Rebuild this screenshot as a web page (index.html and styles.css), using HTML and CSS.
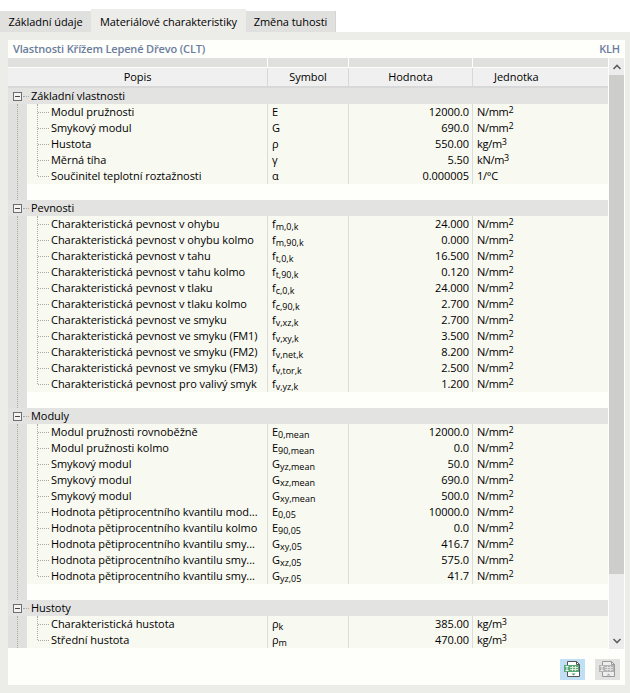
FILE: index.html
```html
<!DOCTYPE html>
<html lang="cs">
<head>
<meta charset="utf-8">
<title>Vlastnosti</title>
<link rel="stylesheet" href="styles.css">
</head>
<body>
<div class="tabs">
  <div class="tab t1">Základní údaje</div>
  <div class="tab active">Materiálové charakteristiky</div>
  <div class="tab t3">Změna tuhosti</div>
</div>
<div class="page">
  <div class="panel">
    <div class="title"><span>Vlastnosti Křížem Lepené Dřevo (CLT)</span><span>KLH</span></div>
    <div class="main">
      <div class="table">
        <div class="strip"><i class="c1"></i><i class="c2"></i><i class="c3"></i><i class="c4"></i></div>
        <div class="head">
          <div class="c1">Popis</div><div class="c2">Symbol</div><div class="c3">Hodnota</div><div class="c4 hu">Jednotka</div>
        </div>

        <section class="section">
          <div class="ghead"><span class="box"></span><span class="dash"></span>Základní vlastnosti</div>
          <div class="sbody"><div class="gutter"></div><div class="rows">
            <div class="items">
            <div class="row"><div class="c1">Modul pružnosti</div><div class="c2">E</div><div class="c3">12000.0</div><div class="c4">N/mm<sup>2</sup></div></div>
            <div class="row"><div class="c1">Smykový modul</div><div class="c2">G</div><div class="c3">690.0</div><div class="c4">N/mm<sup>2</sup></div></div>
            <div class="row"><div class="c1">Hustota</div><div class="c2">ρ</div><div class="c3">550.00</div><div class="c4">kg/m<sup>3</sup></div></div>
            <div class="row"><div class="c1">Měrná tíha</div><div class="c2">γ</div><div class="c3">5.50</div><div class="c4">kN/m<sup>3</sup></div></div>
            <div class="row"><div class="c1">Součinitel teplotní roztažnosti</div><div class="c2">α</div><div class="c3">0.000005</div><div class="c4">1/°C</div></div>
            </div>
            <div class="blank"></div>
          </div></div>
        </section>

        <section class="section">
          <div class="ghead"><span class="box"></span><span class="dash"></span>Pevnosti</div>
          <div class="sbody"><div class="gutter"></div><div class="rows">
            <div class="items">
            <div class="row"><div class="c1">Charakteristická pevnost v ohybu</div><div class="c2">f<sub>m,0,k</sub></div><div class="c3">24.000</div><div class="c4">N/mm<sup>2</sup></div></div>
            <div class="row"><div class="c1">Charakteristická pevnost v ohybu kolmo</div><div class="c2">f<sub>m,90,k</sub></div><div class="c3">0.000</div><div class="c4">N/mm<sup>2</sup></div></div>
            <div class="row"><div class="c1">Charakteristická pevnost v tahu</div><div class="c2">f<sub>t,0,k</sub></div><div class="c3">16.500</div><div class="c4">N/mm<sup>2</sup></div></div>
            <div class="row"><div class="c1">Charakteristická pevnost v tahu kolmo</div><div class="c2">f<sub>t,90,k</sub></div><div class="c3">0.120</div><div class="c4">N/mm<sup>2</sup></div></div>
            <div class="row"><div class="c1">Charakteristická pevnost v tlaku</div><div class="c2">f<sub>c,0,k</sub></div><div class="c3">24.000</div><div class="c4">N/mm<sup>2</sup></div></div>
            <div class="row"><div class="c1">Charakteristická pevnost v tlaku kolmo</div><div class="c2">f<sub>c,90,k</sub></div><div class="c3">2.700</div><div class="c4">N/mm<sup>2</sup></div></div>
            <div class="row"><div class="c1">Charakteristická pevnost ve smyku</div><div class="c2">f<sub>v,xz,k</sub></div><div class="c3">2.700</div><div class="c4">N/mm<sup>2</sup></div></div>
            <div class="row"><div class="c1">Charakteristická pevnost ve smyku (FM1)</div><div class="c2">f<sub>v,xy,k</sub></div><div class="c3">3.500</div><div class="c4">N/mm<sup>2</sup></div></div>
            <div class="row"><div class="c1">Charakteristická pevnost ve smyku (FM2)</div><div class="c2">f<sub>v,net,k</sub></div><div class="c3">8.200</div><div class="c4">N/mm<sup>2</sup></div></div>
            <div class="row"><div class="c1">Charakteristická pevnost ve smyku (FM3)</div><div class="c2">f<sub>v,tor,k</sub></div><div class="c3">2.500</div><div class="c4">N/mm<sup>2</sup></div></div>
            <div class="row"><div class="c1">Charakteristická pevnost pro valivý smyk</div><div class="c2">f<sub>v,yz,k</sub></div><div class="c3">1.200</div><div class="c4">N/mm<sup>2</sup></div></div>
            </div>
            <div class="blank"></div>
          </div></div>
        </section>

        <section class="section">
          <div class="ghead"><span class="box"></span><span class="dash"></span>Moduly</div>
          <div class="sbody"><div class="gutter"></div><div class="rows">
            <div class="items">
            <div class="row"><div class="c1">Modul pružnosti rovnoběžně</div><div class="c2">E<sub>0,mean</sub></div><div class="c3">12000.0</div><div class="c4">N/mm<sup>2</sup></div></div>
            <div class="row"><div class="c1">Modul pružnosti kolmo</div><div class="c2">E<sub>90,mean</sub></div><div class="c3">0.0</div><div class="c4">N/mm<sup>2</sup></div></div>
            <div class="row"><div class="c1">Smykový modul</div><div class="c2">G<sub>yz,mean</sub></div><div class="c3">50.0</div><div class="c4">N/mm<sup>2</sup></div></div>
            <div class="row"><div class="c1">Smykový modul</div><div class="c2">G<sub>xz,mean</sub></div><div class="c3">690.0</div><div class="c4">N/mm<sup>2</sup></div></div>
            <div class="row"><div class="c1">Smykový modul</div><div class="c2">G<sub>xy,mean</sub></div><div class="c3">500.0</div><div class="c4">N/mm<sup>2</sup></div></div>
            <div class="row"><div class="c1">Hodnota pětiprocentního kvantilu mod...</div><div class="c2">E<sub>0,05</sub></div><div class="c3">10000.0</div><div class="c4">N/mm<sup>2</sup></div></div>
            <div class="row"><div class="c1">Hodnota pětiprocentního kvantilu kolmo</div><div class="c2">E<sub>90,05</sub></div><div class="c3">0.0</div><div class="c4">N/mm<sup>2</sup></div></div>
            <div class="row"><div class="c1">Hodnota pětiprocentního kvantilu smy...</div><div class="c2">G<sub>xy,05</sub></div><div class="c3">416.7</div><div class="c4">N/mm<sup>2</sup></div></div>
            <div class="row"><div class="c1">Hodnota pětiprocentního kvantilu smy...</div><div class="c2">G<sub>xz,05</sub></div><div class="c3">575.0</div><div class="c4">N/mm<sup>2</sup></div></div>
            <div class="row"><div class="c1">Hodnota pětiprocentního kvantilu smy...</div><div class="c2">G<sub>yz,05</sub></div><div class="c3">41.7</div><div class="c4">N/mm<sup>2</sup></div></div>
            </div>
            <div class="blank"></div>
          </div></div>
        </section>

        <section class="section">
          <div class="ghead"><span class="box"></span><span class="dash"></span>Hustoty</div>
          <div class="sbody"><div class="gutter"></div><div class="rows">
            <div class="items">
            <div class="row"><div class="c1">Charakteristická hustota</div><div class="c2">ρ<sub>k</sub></div><div class="c3">385.00</div><div class="c4">kg/m<sup>3</sup></div></div>
            <div class="row"><div class="c1">Střední hustota</div><div class="c2">ρ<sub>m</sub></div><div class="c3">470.00</div><div class="c4">kg/m<sup>3</sup></div></div>
            </div>
          </div></div>
        </section>
      </div>
      <div class="scrollbar">
        <div class="arrow"><svg width="10" height="6" viewBox="0 0 10 6"><path d="M1.5 5 L5 1.500 L8.500 5" fill="none" stroke="#5f5f5f" stroke-width="1.6"/></svg></div>
        <div class="thumb"></div>
        <div class="track"></div>
        <div class="arrow"><svg width="10" height="6" viewBox="0 0 10 6"><path d="M1.5 1 L5 4.500 L8.500 1" fill="none" stroke="#5f5f5f" stroke-width="1.6"/></svg></div>
      </div>
    </div>
    <div class="footer">
      <div class="btn on">
        <svg width="25" height="21" viewBox="0 0 25 21"><path d="M7.500 2.500H16.500L19.500 5.500V17.500H7.500Z" fill="#fff" stroke="#555"/><path d="M16.500 2.500V5.500H19.500" fill="none" stroke="#555"/><rect x="4" y="6" width="15" height="7" fill="#5aa878"/><path d="M5.500 7.500H8.500M5.500 11.500H8.500M7 7.500V11.500" stroke="#fff"/><path d="M10 8.500H18M10 10.500H18M12.500 7V12M15.500 7V12" stroke="#d8ecd8"/><path d="M11.500 14.500H15.500L13.500 16.500Z" fill="#3f9a63"/></svg>
      </div>
      <div class="btn off">
        <svg width="25" height="21" viewBox="0 0 25 21"><path d="M7.500 2.500H16.500L19.500 5.500V17.500H7.500Z" fill="#eee" stroke="#999"/><path d="M16.500 2.500V5.500H19.500" fill="none" stroke="#999"/><rect x="4" y="6" width="15" height="7" fill="#b4b4b4"/><path d="M5.500 7.500H8.500M5.500 11.500H8.500M7 7.500V11.500" stroke="#eee"/><path d="M10 8.500H18M10 10.500H18M12.500 7V12M15.500 7V12" stroke="#ddd"/><path d="M11.500 16.500H15.500L13.500 14.500Z" fill="#aaa"/></svg>
      </div>
    </div>
  </div>
</div>
</body>
</html>
```
FILE: styles.css
```css
* { box-sizing: border-box; }
html, body { margin: 0; padding: 0; }
body {
  width: 630px; height: 693px; overflow: hidden; background: #fff;
  font: 11px/16px "Open Sans", "Noto Sans", sans-serif; color: #000; letter-spacing: -0.05px;
  display: flex; flex-direction: column;
}
.tabs { display: flex; align-items: flex-end; height: 32px; flex: none; }
.tab { height: 21px; line-height: 21px; background: #e0e0df; text-align: center; }
.t1 { width: 91px; }
.t3 { width: 90px; border-right: 1px solid #d4d4d2; }
.tab.active { width: 155px; height: 23px; line-height: 25px; background: #ecece9; }
.page { flex: 1; background: #ecece9; padding: 8px 5px 8px 8px; display: flex; }
.panel { flex: 1; background: #fefefa; display: flex; flex-direction: column; }
.title {
  height: 18px; flex: none; padding: 0 5px; display: flex; justify-content: space-between;
  font-weight: 600; color: #6b7d9f; line-height: 18px; letter-spacing: -0.15px;
}
.main { display: flex; height: 591px; flex: none; }
.table { width: 600px; flex: none; overflow: hidden; }
.scrollbar { width: 15px; margin-left: 1px; background: #ececec; display: flex; flex-direction: column; }
.arrow { height: 17px; flex: none; display: flex; align-items: center; justify-content: center; }
.thumb { height: 499px; flex: none; background: #cdcdcb; }
.track { flex: 1; }

.strip, .head, .row { display: grid; grid-template-columns: 260px 81px 124px 135px; }
.strip { height: 9px; background: #e0e0df; }
.strip i { border-right: 1px solid #fefefa; }
.strip i.c4 { border: 0; }
.head { height: 20px; margin-top: 1px; background: #f0f0f0; border-bottom: 2px solid #d8d8d8; text-align: center; line-height: 18px; }
.head > div { border-right: 1px solid #d8d8d8; }
.head > .c4 { border: 0; text-align: left; padding-left: 21px; }

.ghead { position: relative; height: 16px; background: #e3e3e1; padding-left: 23px; display: flex; align-items: center; }
.box { position: absolute; left: 5px; top: 4px; width: 9px; height: 9px; border: 1px solid #6e6e6e; background: #f2f2f0; }
.box::after { content: ""; position: absolute; left: 1px; right: 1px; top: 3px; height: 1px; background: #444; }
.dash { position: absolute; left: 15px; top: 8px; width: 6px; border-top: 1px dotted #aaa; }
.sbody { display: flex; }
.gutter { width: 19px; flex: none; background: #e0e0df; position: relative; }
.gutter::before { content: ""; position: absolute; left: 9px; top: 0; bottom: 0; border-left: 1px dotted #a8a8a8; }
.rows { flex: 1; min-width: 0; }
.items { position: relative; }
.items::before { content: ""; position: absolute; left: 10px; top: 0; bottom: 8px; border-left: 1px dotted #a8a8a8; }
.row { height: 16px; background: #f8f9f1; grid-template-columns: 241px 81px 124px 135px; }
.row > div { white-space: nowrap; border-right: 1px solid #dcdcd8; }
.row > .c1 { padding-left: 24px; position: relative; }
.row > .c1::before { content: ""; position: absolute; left: 11px; top: 8px; width: 11px; border-top: 1px dotted #a8a8a8; }
.row > .c2 { padding-left: 4px; }
.row > .c3 { text-align: right; padding-right: 3px; }
.row > .c4 { padding-left: 4px; border: 0; letter-spacing: -0.3px; }
.blank { height: 16px; background: #fefefa; }
sup { font-size: 9px; line-height: 0; vertical-align: 3px; letter-spacing: 0; }
sub { font-size: 9px; line-height: 0; vertical-align: -1.5px; letter-spacing: 0; }

.footer { flex: 1; display: flex; justify-content: flex-end; align-items: flex-start; gap: 10px; padding: 10px 5px 0 0; }
.btn { width: 25px; height: 21px; display: flex; }
.btn.on { background: #c0dff5; }
.btn.off { background: #e2e2e0; }
```
